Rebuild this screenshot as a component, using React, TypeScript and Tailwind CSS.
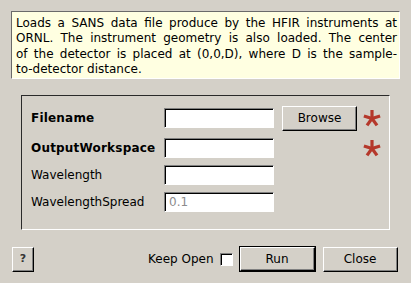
import React from 'react';

const sunken =
  'border border-t-[#808080] border-l-[#808080] border-b-white border-r-white shadow-[inset_1px_1px_0_#000]';
const raised =
  'border border-t-white border-l-white border-b-black border-r-black shadow-[inset_-1px_-1px_0_#808080] bg-[#d4d0c8]';

const Asterisk: React.FC = () => (
  <svg width="18" height="18" viewBox="0 0 18 18" className="ml-[6px]">
    <g stroke="#b5382b" strokeWidth="3.2" strokeLinecap="butt">
      <line x1="9" y1="9.5" x2="9" y2="1" />
      <line x1="9" y1="9.5" x2="17.1" y2="6.9" />
      <line x1="9" y1="9.5" x2="14" y2="16.4" />
      <line x1="9" y1="9.5" x2="4" y2="16.4" />
      <line x1="9" y1="9.5" x2="0.9" y2="6.9" />
    </g>
  </svg>
);

const Field: React.FC<{ value?: string }> = ({ value }) => (
  <div className={`w-[110px] h-[20px] bg-white ${sunken} flex items-center pl-[4px] text-[#8c8c8c]`}>
    {value}
  </div>
);

const lines = [
  'Loads a SANS data file produce by the HFIR instruments at',
  'ORNL. The instrument geometry is also loaded. The center',
  'of the detector is placed at (0,0,D), where D is the sample-',
];

const App: React.FC = () => {
  return (
    <div
      className="w-[411px] h-[283px] bg-[#d4d0c8] text-[12px] text-black overflow-hidden flex flex-col"
      style={{ fontFamily: '"DejaVu Sans", "Liberation Sans", sans-serif' }}
    >
      <div className="ml-[11px] mt-[11px] w-[389px] h-[68px] bg-[#ffffe1] border border-t-[#6a6a6a] border-l-[#6a6a6a] border-b-white border-r-white pl-[4px] pr-[2px] pt-[4px] leading-[15.3px]">
        {lines.map((l) => (
          <div key={l} className="text-justify [text-align-last:justify] whitespace-nowrap">
            {l}
          </div>
        ))}
        <div>to-detector distance.</div>
      </div>

      <div className="ml-[21px] mt-[16px] w-[369px] h-[135px] border border-t-[#2a2a2a] border-l-[#2a2a2a] border-b-white border-r-white pl-[9px] pt-[9px] flex flex-col">
        <div className="flex items-center h-[26px]">
          <span className="w-[133px] font-bold tracking-[0.2px]">Filename</span>
          <Field />
          <button className={`ml-[8px] w-[75px] h-[25px] ${raised}`}>Browse</button>
          <Asterisk />
        </div>
        <div className="flex items-center h-[26px] mt-[4px]">
          <span className="w-[133px] font-bold tracking-[0.2px]">OutputWorkspace</span>
          <Field />
          <div className="w-[83px]" />
          <Asterisk />
        </div>
        <div className="flex items-center h-[20px] mt-[4px]">
          <span className="w-[133px]">Wavelength</span>
          <Field />
        </div>
        <div className="flex items-center h-[20px] mt-[7px]">
          <span className="w-[133px]">WavelengthSpread</span>
          <Field value="0.1" />
        </div>
      </div>

      <div className="flex items-center mt-[16px] h-[26px]">
        <button className={`ml-[12px] w-[22px] h-[25px] ${raised} font-bold text-[11px] text-[#333]`}>?</button>
        <span className="ml-[114px]">Keep Open</span>
        <div className={`ml-[6px] w-[13px] h-[13px] bg-white ${sunken}`} />
        <button className="ml-[6px] w-[77px] h-[26px] border border-black bg-[#d4d0c8]">
          <div className={`w-full h-full ${raised} flex items-center justify-center`}>Run</div>
        </button>
        <button className={`ml-[7px] w-[75px] h-[25px] ${raised}`}>Close</button>
      </div>
    </div>
  );
};

export default App;
